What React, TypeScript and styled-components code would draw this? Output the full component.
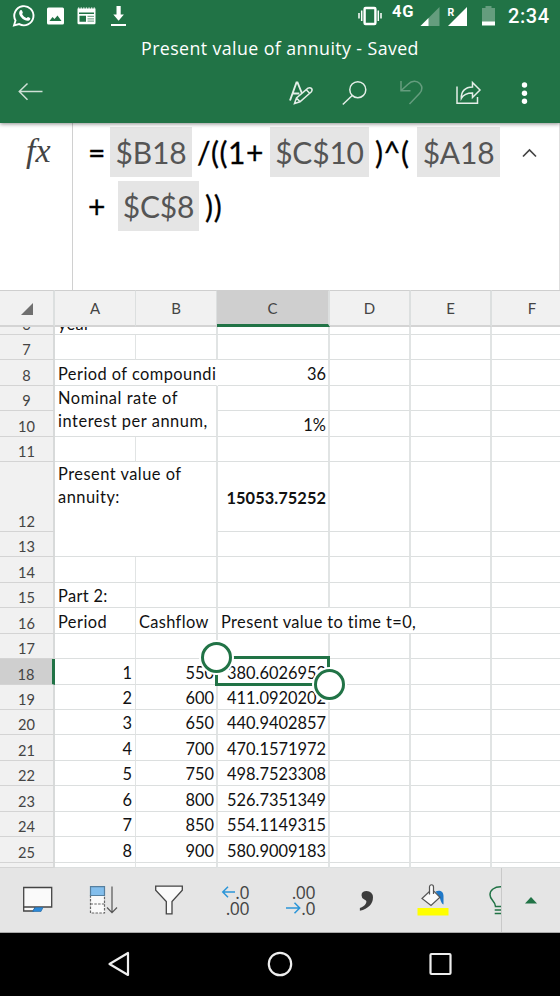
import styled, { createGlobalStyle } from "styled-components";

const GREEN = "#217346";
const LINE = "#dcdfdf";

const GlobalStyle = createGlobalStyle`
  * {
    box-sizing: border-box;
  }
  body {
    margin: 0;
    background: #000;
  }
  svg {
    display: block;
    overflow: visible;
  }
`;

const Screen = styled.div`
  width: 560px;
  height: 996px;
  display: flex;
  flex-direction: column;
  overflow: hidden;
  background: #fff;
  font-family: Lato, "Open Sans", sans-serif;
`;

const Header = styled.header`
  height: 123px;
  flex: none;
  background: ${GREEN};
  color: #fff;
  box-shadow: 0 1px 4px rgba(0, 0, 0, 0.45);
  z-index: 1;
`;

const StatusBar = styled.div`
  height: 32px;
  display: flex;
  align-items: flex-start;
  padding-left: 12px;
`;

const Slot = styled.div<{ $w: number; $gap?: number }>`
  width: ${(props) => props.$w}px;
  margin-left: ${(props) => props.$gap ?? 0}px;
  height: 32px;
  flex: none;
`;

const Network = styled(Slot)`
  font: 700 16.5px/24px Roboto, sans-serif;
  letter-spacing: 0.9px;
`;

const Clock = styled(Slot)`
  font: 500 20px/33px Roboto, sans-serif;
  letter-spacing: 0.6px;
  white-space: nowrap;
`;

const Title = styled.h1`
  margin: 0;
  height: 32px;
  font: 400 17.8px/33px "Open Sans", sans-serif;
  letter-spacing: 0.4px;
  text-align: center;
  white-space: nowrap;
`;

const Actions = styled.div`
  height: 57px;
  display: flex;
  align-items: center;
  padding-left: 18px;
`;

const Action = styled.div<{ $w: number; $gap?: number }>`
  width: ${(props) => props.$w}px;
  margin-left: ${(props) => props.$gap ?? 0}px;
  flex: none;
`;

const FormulaBar = styled.section`
  height: 167px;
  flex: none;
  display: flex;
  background: #fff;
  border-right: 1px solid #dedede;
`;

const Fx = styled.div`
  width: 73px;
  border-right: 1px solid #d0d0d0;
  padding: 10px 0 0 26px;
  color: #444;
  font: italic 400 34px/36px "Liberation Serif", serif;
`;

const Formula = styled.div`
  flex: 1;
  padding: 4px 0 0 15px;
  font-size: 30px;
  color: #000;
`;

const FormulaLine = styled.div`
  display: flex;
  height: 50px;
  margin-bottom: 4px;
  line-height: 50px;
  white-space: pre;
`;

const Operator = styled.span<{ $w: number; $pad?: number; $track?: number }>`
  width: ${(props) => props.$w}px;
  padding-left: ${(props) => props.$pad ?? 0}px;
  letter-spacing: ${(props) => props.$track ?? 0}px;
  flex: none;
  -webkit-text-stroke: 0.3px #000;
`;

const Reference = styled.span<{ $w: number }>`
  width: ${(props) => props.$w}px;
  flex: none;
  background: #e5e5e5;
  color: #555;
  letter-spacing: -0.2px;
  text-align: center;
`;

const Collapse = styled.div`
  padding: 21px 0 0 21px;
`;

const Sheet = styled.section`
  height: 578px;
  flex: none;
  display: grid;
  grid-template-columns: 55px 81px 82px 112px 81px 81px 82px;
  grid-template-rows: 37px 8px 25px 26px 25px 26px 25px 70px 25px 26px 25px 26px 25px 26px 25px 25px 26px 25px 26px 25px 26px 5px;
  border-bottom: 1px solid #cfcfcf;
  color: #111;
  font-size: 16.4px;
`;

const ColumnHead = styled.div<{ $active?: boolean; $thin?: boolean }>`
  display: flex;
  align-items: center;
  justify-content: center;
  border-top: 1px solid #cfcfcf;
  border-right: ${(props) => (props.$thin ? 1 : 2)}px solid ${LINE};
  border-bottom: ${(props) => (props.$active ? `3px solid ${GREEN}` : "2px solid #d4d4d4")};
  background: ${(props) => (props.$active ? "#cfcfcf" : "#f1f1f1")};
  color: #444;
  font-size: 15px;
  margin-left: ${(props) => (props.$active ? -1 : 0)}px;
  z-index: 1;
`;

const RowHead = styled.div<{ $active?: boolean }>`
  display: flex;
  align-items: flex-end;
  justify-content: center;
  overflow: hidden;
  border-right: ${(props) => (props.$active ? `3px solid ${GREEN}` : "2px solid #d8dada")};
  border-bottom: 1px solid #d4d4d4;
  background: ${(props) => (props.$active ? "#cfcfcf" : "#f1f1f1")};
  color: #444;
  font-size: 14.6px;
  line-height: 19px;
`;

const Cell = styled.div<{
  $row: number;
  $col: number;
  $rows: number;
  $cols: number;
  $right?: boolean;
  $top?: boolean;
  $bold?: boolean;
  $open?: boolean;
}>`
  position: relative;
  grid-row: ${(props) => props.$row} / span ${(props) => props.$rows};
  grid-column: ${(props) => props.$col} / span ${(props) => props.$cols};
  display: flex;
  align-items: ${(props) => (props.$top ? "flex-start" : "flex-end")};
  justify-content: ${(props) => (props.$right ? "flex-end" : "flex-start")};
  min-width: 0;
  min-height: 0;
  padding: 0 ${(props) => (props.$col === 2 ? 3 : 2)}px 0 3px;
  border-bottom: 1px solid ${LINE};
  border-right: ${(props) => (props.$col === 2 && props.$cols === 1 ? 1 : 2)}px solid
    ${(props) => (props.$open ? "transparent" : "#e1e4e4")};
  font-weight: ${(props) => (props.$bold ? 700 : 400)};
  line-height: ${(props) => (props.$top ? 23 : 22)}px;
  white-space: pre;
`;

const Clip = styled.span<{ $track?: number; $lift?: number }>`
  letter-spacing: ${(props) => props.$track ?? 0}px;
  margin-bottom: ${(props) => props.$lift ?? 0}px;
`;

const Selection = styled.div`
  position: absolute;
  left: -3px;
  top: -3px;
  width: 115px;
  height: 30px;
  border: 3px solid ${GREEN};
  z-index: 2;
`;

const Handle = styled.div<{ $end?: boolean }>`
  position: absolute;
  width: 31px;
  height: 31px;
  border: 3px solid ${GREEN};
  border-radius: 50%;
  background: #fff;
  box-shadow: 0 0 0 2px #fff;
  ${(props) => (props.$end ? "right: -18px; bottom: -17px;" : "left: -17px; top: -17px;")}
`;

const Toolbar = styled.nav`
  height: 65px;
  flex: none;
  display: flex;
  background: #e5e5e5;
  border-bottom: 1px solid #aaa;
`;

const Tools = styled.div`
  width: 501px;
  display: flex;
  align-items: flex-start;
  padding: 16px 0 0 22px;
`;

const Tool = styled.div<{ $w: number; $gap?: number; $cut?: boolean }>`
  width: ${(props) => props.$w}px;
  margin-left: ${(props) => props.$gap ?? 0}px;
  height: 34px;
  flex: none;
  overflow: ${(props) => (props.$cut ? "hidden" : "visible")};
`;

const Decimals = styled(Tool)`
  color: #444;
  font: 400 17.6px/16px "Open Sans", sans-serif;
  letter-spacing: -0.5px;
`;

const DecimalRow = styled.div`
  display: flex;
  align-items: center;
  justify-content: flex-end;
  height: 16px;
`;

const Comma = styled(Tool)`
  color: #3c3c3c;
  font: 700 66px/34px "Liberation Serif", serif;
  margin-top: -22px;
`;

const Expand = styled.div`
  width: 59px;
  border-left: 1px solid #c9c9c9;
  display: flex;
  align-items: center;
  justify-content: center;
`;

const SystemNav = styled.footer`
  flex: 1;
  display: flex;
  align-items: center;
  justify-content: space-between;
  padding: 0 108px 2px;
  background: #000;
`;

interface ICell {
  text?: string;
  cols?: number;
  rows?: number;
  right?: boolean;
  top?: boolean;
  bold?: boolean;
  open?: boolean;
  lift?: number;
  track?: number;
}

const columns = ["A", "B", "C", "D", "E", "F"];
const FIRST_ROW = 6;
const LAST_ROW = 26;

const cells: Record<string, ICell> = {
  A6: { text: "year", cols: 2, lift: -1, track: 0.3 },
  A8: { text: "Period of compoundi", cols: 2, open: true, track: 0.45 },
  C8: { text: "36", right: true },
  A9: { text: "Nominal rate of\ninterest per annum,", cols: 2, rows: 2, top: true, track: 0.55 },
  C10: { text: "1%", right: true },
  A12: { text: "Present value of\nannuity:", cols: 2, rows: 2, top: true, track: 0.5 },
  C12: { text: "15053.75252", right: true, bold: true, lift: 22, track: 0.05 },
  A15: { text: "Part 2:", track: 0.35 },
  A16: { text: "Period", track: 0.45 },
  B16: { text: "Cashflow", track: 0.35 },
  C16: { text: "Present value to time t=0,", cols: 3, track: 0.4 },
};

const cashflows = [
  ["550", "380.6026952"],
  ["600", "411.0920202"],
  ["650", "440.9402857"],
  ["700", "470.1571972"],
  ["750", "498.7523308"],
  ["800", "526.7351349"],
  ["850", "554.1149315"],
  ["900", "580.9009183"],
];
cashflows.forEach(([amount, value], i) => {
  cells[`A${18 + i}`] = { text: String(i + 1), right: true };
  cells[`B${18 + i}`] = { text: amount, right: true };
  cells[`C${18 + i}`] = { text: value, right: true };
});

// cells hidden under a merged or overflowing neighbour
const covered = new Set(["B6", "B8", "B9", "A10", "B10", "B12", "A13", "B13", "D16", "E16"]);

function Grid() {
  const rows = Array.from({ length: LAST_ROW - FIRST_ROW + 1 }, (_, i) => FIRST_ROW + i);
  return (
    <Sheet>
      <ColumnHead>
        <svg width="12" height="12">
          <path d="M12 1V13H0Z" fill="#707070" />
        </svg>
      </ColumnHead>
      {columns.map((name) => (
        <ColumnHead key={name} $active={name === "C"} $thin={name === "A"}>
          {name}
        </ColumnHead>
      ))}
      {rows.map((row) => (
        <RowHead key={row} $active={row === 18} style={{ gridRow: row - FIRST_ROW + 2, gridColumn: 1 }}>
          {row === LAST_ROW ? "" : row}
        </RowHead>
      ))}
      {rows.flatMap((row) =>
        columns.map((name, i) => {
          const id = `${name}${row}`;
          if (covered.has(id)) return null;
          const cell = cells[id] ?? {};
          return (
            <Cell
              key={id}
              $row={row - FIRST_ROW + 2}
              $col={i + 2}
              $rows={cell.rows ?? 1}
              $cols={cell.cols ?? 1}
              $right={cell.right}
              $top={cell.top}
              $bold={cell.bold}
              $open={cell.open}
            >
              {cell.text && (
                <Clip $track={cell.track} $lift={cell.lift}>
                  {cell.text}
                </Clip>
              )}
              {id === "C18" && (
                <Selection>
                  <Handle />
                  <Handle $end />
                </Selection>
              )}
            </Cell>
          );
        })
      )}
    </Sheet>
  );
}

function Status() {
  return (
    <StatusBar>
      <Slot $w={23}>
        <svg width="23" height="32" fill="none" stroke="#fff" strokeWidth="1.9">
          <path d="M2 25.5 3.5 20.4A9.6 9.6 0 1 1 7.2 24.1Z" />
          <path
            d="M8.2 10.4c.7-.7 1.6-.5 1.9.3l.7 1.7c.2.5-.7 1.3-.7 1.6 1 2 2.4 3.2 4.3 4 .4.1 1.2-1.3 1.7-1.1l2 1c.5.3.1 1.8-.7 2.4-1.3 1-3.3.6-5.3-.5-2.3-1.3-4-3.4-4.6-5-.6-1.7-.3-3.5.7-4.4Z"
            fill="#fff"
            stroke="none"
          />
        </svg>
      </Slot>
      <Slot $w={17} $gap={12}>
        <svg width="17" height="32">
          <path
            fillRule="evenodd"
            fill="#fff"
            d="M1.5 7.5h14q1.5 0 1.5 1.5v14q0 1.5-1.5 1.5h-14Q0 24.500 0 23V9q0-1.500 1.500-1.500ZM2.500 21h12l-4-5.500-3 3.500-2-2Z"
          />
        </svg>
      </Slot>
      <Slot $w={19} $gap={13}>
        <svg width="19" height="32">
          <path d="M.5 8.5h18v14.5q0 1.2-1.2 1.2H1.7Q.5 24.2.5 23Z" fill="#fff" />
          <path d="M1 8.2h17" stroke="#fff" strokeWidth="1.2" strokeDasharray="1.3 1.3" />
          <path d="M2 12.5h15v1.500H2ZM2.500 15.800h6.500v6H2.500Z" fill={GREEN} />
          <path d="M10.500 16.400h6.500M10.500 18.800h6.500M10.500 21.200h6.500" stroke="#7fac92" strokeWidth="1.200" />
        </svg>
      </Slot>
      <Slot $w={15} $gap={15}>
        <svg width="15" height="32" fill="#fff">
          <path d="M5.500 6h4.200v8.500h3.200L7.600 20.800 2.300 14.500h3.200ZM0 24h15v2H0Z" />
        </svg>
      </Slot>
      <Slot $w={24} $gap={232}>
        <svg width="24" height="32" fill="none" stroke="#fff" strokeWidth="1.500">
          <rect x="6.600" y="8" width="10.800" height="16" rx="1" strokeWidth="2.400" />
          <path d="M3.700 10.500v10.500M1 13v5.500M20.300 10.500v10.500M23 13v5.500" />
        </svg>
      </Slot>
      <Network $w={24} $gap={10}>
        4G
      </Network>
      <Slot $w={20} $gap={4}>
        <svg width="20" height="32">
          <path d="M19.500 7v19H.5Z" fill="#659d7e" />
          <path d="M8.500 18v8H.5Z" fill="#fff" />
        </svg>
      </Slot>
      <Slot $w={20} $gap={8}>
        <svg width="20" height="32">
          <path d="M19 7v19H0Z" fill="#fff" />
          <text x="-.5" y="16" fill="#fff" fontSize="10.500" fontWeight="700" fontFamily="Roboto, sans-serif">
            R
          </text>
        </svg>
      </Slot>
      <Slot $w={13} $gap={14}>
        <svg width="13" height="32">
          <path d="M3.500 6h6v2H13v14H0V8h3.500Z" fill="#659d7e" />
          <path d="M0 21.500h13v4H0Z" fill="#fff" />
        </svg>
      </Slot>
      <Clock $w={45} $gap={13}>
        2:34
      </Clock>
    </StatusBar>
  );
}

function App() {
  return (
    <Screen>
      <GlobalStyle />
      <Header>
        <Status />
        <Title>Present value of annuity - Saved</Title>
        <Actions>
          <Action $w={25}>
            <svg width="25" height="18" viewBox="0 0 25 18" fill="none" stroke="#cfe0d6" strokeWidth="1.500">
              <path d="M24.500 7.500H1.500M9.500-.5 1.300 7.500l8.200 8.200" />
            </svg>
          </Action>
          <Action $w={24} $gap={246}>
            <svg width="24" height="24" fill="none" stroke="#e4eee8" strokeWidth="1.500">
              <path d="M1 19.500 7.500 1.500h1L13 12.500M3.800 12.500h6.500" strokeWidth="1.900" />
              <path d="m5.500 22.500 2-5.500L19 7.200q2-1.200 3.400.2t0 3.300L11 20.800ZM7.500 17l3.500 3.800M17.200 8.800l3.600 3.500" fill={GREEN} />
            </svg>
          </Action>
          <Action $w={25} $gap={29}>
            <svg width="25" height="24" fill="none" stroke="#e4eee8" strokeWidth="1.500">
              <circle cx="15.800" cy="8.700" r="8" />
              <path d="M10.200 14.500.8 23.500" />
            </svg>
          </Action>
          <Action $w={23} $gap={33}>
            <svg width="23" height="24" fill="none" stroke="#659d7e" strokeWidth="1.500">
              <path d="M1 0v9.800h9.500M1.200 9.500 8 3.200C12-.8 17-.6 19.800 2.500c3 3.300 2.300 7.200-.3 10L9.500 23" />
            </svg>
          </Action>
          <Action $w={25} $gap={33}>
            <svg width="25" height="24" fill="none" stroke="#e4eee8" strokeWidth="1.500">
              <path d="M1 5.500V22.300H21.500V16" />
              <path d="M5.300 17.500C5 10.500 9 6 16.500 6V1.500L24 9l-7.500 7.500V12C11.500 12 7.500 13.500 5.300 17.500Z" />
            </svg>
          </Action>
          <Action $w={6} $gap={41}>
            <svg width="6" height="24" fill="#fff">
              <circle cx="2.500" cy="4" r="2.700" />
              <circle cx="2.500" cy="12.200" r="2.700" />
              <circle cx="2.500" cy="20.300" r="2.700" />
            </svg>
          </Action>
        </Actions>
      </Header>
      <FormulaBar>
        <Fx>fx</Fx>
        <Formula>
          <FormulaLine>
            <Operator $w={22}>=</Operator>
            <Reference $w={82}>$B18</Reference>
            <Operator $w={78} $pad={5} $track={0.5}>/((1+</Operator>
            <Reference $w={99}>$C$10</Reference>
            <Operator $w={48} $pad={6} $track={0.3}>)^(</Operator>
            <Reference $w={83}>$A18</Reference>
            <Collapse>
              <svg width="16" height="10" fill="none" stroke="#444" strokeWidth="1.700">
                <path d="M2 8.500 8.500 2 15 8.500" />
              </svg>
            </Collapse>
          </FormulaLine>
          <FormulaLine>
            <Operator $w={30}>+</Operator>
            <Reference $w={81}>$C$8</Reference>
            <Operator $w={40} $pad={6} $track={0.8}>))</Operator>
          </FormulaLine>
        </Formula>
      </FormulaBar>
      <Grid />
      <Toolbar>
        <Tools>
          <Tool $w={32}>
            <svg width="32" height="34" stroke="#444" strokeWidth="1.300">
              <path d="M1.700 22.500V27h9.800l2-4" fill="#fafafa" />
              <path d="M1.700 3.500h28v19.500h-28Z" fill="#fafafa" />
              <path d="m13 23.500h8l-2 4h-8.500Z" fill="#2b88d8" stroke="#2b6fa8" strokeWidth=".7" />
            </svg>
          </Tool>
          <Tool $w={29} $gap={35}>
            <svg width="29" height="34" fill="none" stroke="#666" strokeWidth="1.200">
              <path d="M1.500 11.500h14v17.500h-14Z" fill="#fafafa" strokeDasharray="2.500 1.300" />
              <path d="M1.500 20h14" strokeDasharray="2.500 1.300" />
              <path d="M1.500 2.700h14v8.800h-14Z" fill="#83beec" stroke="#557f9f" />
              <path d="M23 2.500v26M18 23.500l5 5.200 5-5.200" stroke="#555" />
            </svg>
          </Tool>
          <Tool $w={30} $gap={36}>
            <svg width="30" height="34">
              <path d="M1.700 2.200h26.600v4L18 17.500v12.300h-5.700V17.500L1.700 6.200Z" fill="#fafafa" stroke="#444" strokeWidth="1.300" />
            </svg>
          </Tool>
          <Decimals $w={28} $gap={37}>
            <DecimalRow>
              <svg width="14" height="12" fill="none" stroke="#2b95d8" strokeWidth="1.500">
                <path d="M14 6H2M7 .8 1.800 6 7 11.200" />
              </svg>
              .0
            </DecimalRow>
            <DecimalRow>.00</DecimalRow>
          </Decimals>
          <Decimals $w={29} $gap={37}>
            <DecimalRow>.00</DecimalRow>
            <DecimalRow>
              <svg width="15" height="12" fill="none" stroke="#2b95d8" strokeWidth="1.500">
                <path d="M0 6h13M8.500.8 13.700 6l-5.200 5.200" />
              </svg>
              .0
            </DecimalRow>
          </Decimals>
          <Comma $w={18} $gap={44}>,</Comma>
          <Tool $w={32} $gap={40}>
            <svg width="32" height="34">
              <path d="M.5 24h31v7.500H.5Z" fill="#ff0" />
              <path d="M18.500 7.500c4-2 8-.3 8 4.500v8.500c-2.500-1-3-5-4-7.500Z" fill="#1f78c8" />
              <path
                d="m5 14.500 7.500-7V3c0-3 4-3 4 0v3.800l6.500 6.500-9 8.200Z"
                fill="#fafafa"
                stroke="#555"
                strokeWidth="1.200"
              />
              <path d="M12.500 7.500v3M16.500 6.500V10" stroke="#555" strokeWidth="1.200" />
            </svg>
          </Tool>
          <Tool $w={12} $gap={40} $cut>
            <svg width="24" height="34" fill="none" stroke={GREEN} strokeWidth="1.500">
              <path d="M6.500 22.500c0-5.500-5.500-6-5.500-11.800C1 6 5.500 2.800 11.500 2.800S22 6 22 10.700c0 5.800-5.500 6.300-5.500 11.800Z" />
              <path d="M5.700 26h12M5.700 29.500h12" />
            </svg>
          </Tool>
        </Tools>
        <Expand>
          <svg width="12" height="7" fill={GREEN}>
            <path d="M0 6.500 6 0l6 6.500Z" />
          </svg>
        </Expand>
      </Toolbar>
      <SystemNav>
        <svg width="22" height="26" fill="none" stroke="#eee" strokeWidth="2.200" strokeLinejoin="round">
          <path d="M20 2v22L1.500 13Z" />
        </svg>
        <svg width="26" height="26" fill="none" stroke="#eee" strokeWidth="2.200">
          <circle cx="13" cy="13" r="11.200" />
        </svg>
        <svg width="23" height="24" fill="none" stroke="#eee" strokeWidth="2.200">
          <rect x="1.500" y="2" width="20" height="20" rx="1" />
        </svg>
      </SystemNav>
    </Screen>
  );
}

export default App;
